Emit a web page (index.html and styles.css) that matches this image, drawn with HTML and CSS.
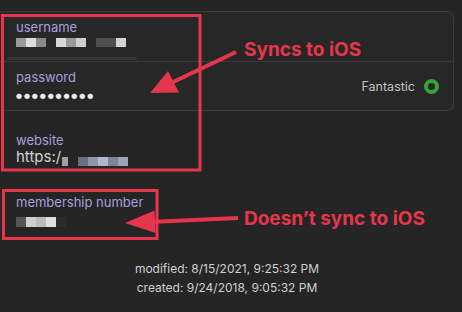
FILE: index.html
```html
<!doctype html>
<html>

<head>
	<link rel="stylesheet" href="styles.css">
</head>

<body>
	<div class="screen">
		<div class="entry">
			<div class="card">
				<div class="field field-user">
					<div class="label">username</div>
					<div class="blur-row">
						<span class="blur user-a"></span>
						<span class="blur user-b"></span>
						<span class="blur user-c"></span>
					</div>
					<div class="scrollbar"></div>
				</div>
				<div class="field field-pass">
					<div class="field-main">
						<div class="label">password</div>
						<div class="dots">••••••••••</div>
					</div>
					<div class="strength">
						<span>Fantastic</span>
						<span class="ring"></span>
					</div>
				</div>
			</div>

			<div class="plain-field website">
				<div class="label">website</div>
				<div class="value">https:/<span class="blur site-a"></span><span class="blur site-b"></span></div>
			</div>

			<div class="plain-field membership">
				<div class="label">membership number</div>
				<div class="blur-row">
					<span class="blur member-a"></span>
				</div>
			</div>

			<div class="meta">
				<div>modified: 8/15/2021, 9:25:32 PM</div>
				<div>created: 9/24/2018, 9:05:32 PM</div>
			</div>
		</div>

		<!-- annotation layer drawn over the screenshot -->
		<div class="annotations">
			<svg class="marks" width="462" height="312" viewBox="0 0 462 312">
				<rect x="2.5" y="15.5" width="197.5" height="154.5" fill="none" stroke="#e5364b" stroke-width="3" />
				<rect x="3.5" y="190.5" width="153.5" height="48" fill="none" stroke="#e5364b" stroke-width="3" />
				<line x1="236" y1="52" x2="170" y2="83.5" stroke="#e5364b" stroke-width="4" />
				<polygon points="150,93 179,92.5 168,71" fill="#e5364b" />
				<line x1="238" y1="218" x2="150" y2="222" stroke="#e5364b" stroke-width="4" />
				<polygon points="125,223 155.5,233 154.5,210.5" fill="#e5364b" />
			</svg>
			<div class="note note-sync">Syncs to iOS</div>
			<div class="note note-nosync">Doesn’t sync to iOS</div>
		</div>
	</div>
</body>

</html>
```

FILE: styles.css
```css
body {
	margin: 0;
	background: #252525;
	font-family: Inter, "Open Sans", sans-serif;
}

.screen {
	position: relative;
	width: 462px;
	height: 312px;
	overflow: hidden;
}

.entry {
	width: 454px;
	padding-top: 11px;
}

.card {
	background: #272727;
	border: 1px solid #3b3b3b;
	border-left: none;
	border-radius: 0 7px 7px 0;
}

.field {
	box-sizing: border-box;
	padding-left: 16px;
}

.field-user {
	height: 50px;
	padding-top: 7px;
	border-bottom: 1px solid #3a3a3a;
}

.label {
	font-size: 13px;
	line-height: 16px;
	color: #a99fdc;
}

.blur-row {
	display: flex;
	gap: 10px;
	margin-top: 3px;
}

.blur {
	display: inline-block;
	height: 9px;
}

.user-a {
	width: 30px;
	background: linear-gradient(90deg, #9a9a9a 0 10px, #dcdcdc 10px 20px, #8a8a8a 20px);
}

.user-b {
	width: 30px;
	background: linear-gradient(90deg, #d8d8d8 0 10px, #9a9a9a 10px 20px, #cfcfcf 20px);
}

.user-c {
	width: 30px;
	background: linear-gradient(90deg, #4f4f4f 0 20px, #d4d4d4 20px);
}

.scrollbar {
	width: 130px;
	height: 3px;
	margin: 10px 0 0 -9px;
	background: #343434;
	border-radius: 2px;
}

.field-pass {
	height: 48px;
	display: flex;
	justify-content: space-between;
	align-items: center;
	padding-right: 14px;
}

.field-main {
	align-self: flex-start;
	padding-top: 7px;
}

.dots {
	margin-top: 2px;
	margin-left: -1px;
	font-size: 17px;
	line-height: 16px;
	font-weight: 700;
	letter-spacing: -0.15px;
	color: #ededed;
}

.strength {
	display: flex;
	align-items: center;
	gap: 9px;
	font-size: 12.5px;
	color: #c4c4c4;
}

.ring {
	box-sizing: border-box;
	width: 15px;
	height: 15px;
	border: 4px solid #36a335;
	border-radius: 50%;
}

.plain-field {
	padding-left: 16px;
}

.website {
	margin-top: 21px;
}

.value {
	font-size: 15px;
	line-height: 18px;
	color: #d2d2d2;
}

.site-a {
	width: 6px;
	margin-left: 1px;
	vertical-align: -4px;
	background: #a0a0a0;
}

.site-b {
	width: 50px;
	margin-left: 10px;
	vertical-align: -4px;
	background: linear-gradient(90deg, #6a7080 0 10px, #8e96ab 10px 20px, #b0b8cc 20px 30px, #7c8498 30px 40px, #9aa2b8 40px);
}

.membership {
	margin-top: 28px;
}

.membership .blur-row {
	margin-top: 7px;
}

.member-a {
	width: 50px;
	height: 10px;
	background: linear-gradient(90deg, #555555 0 10px, #d0d0d0 10px 20px, #bcbcbc 20px 30px, #e0e0e0 30px 40px, #2c2c2c 40px);
}

.meta {
	margin-top: 32px;
	text-align: center;
	font-size: 12px;
	line-height: 19px;
	color: #d0d0d0;
}

.annotations {
	position: absolute;
	top: 0;
	left: 0;
	width: 462px;
	height: 312px;
}

.marks {
	display: block;
}

.note {
	position: absolute;
	font-size: 19px;
	line-height: 19px;
	font-weight: 700;
	color: #e5364b;
	white-space: nowrap;
}

.note-sync {
	left: 244px;
	top: 40px;
}

.note-nosync {
	left: 244px;
	top: 209px;
}
```
